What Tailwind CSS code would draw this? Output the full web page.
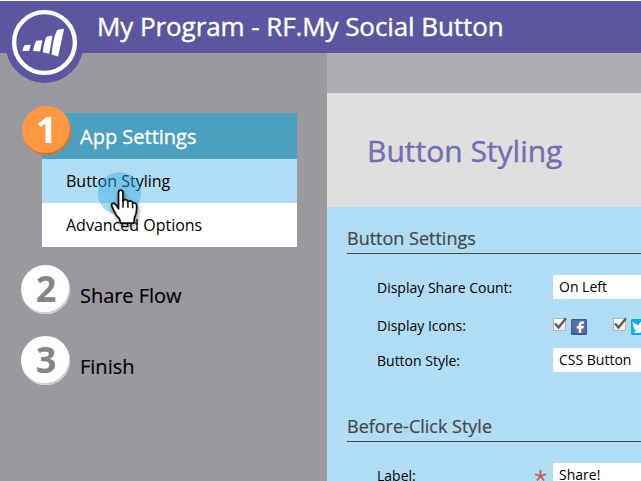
<!DOCTYPE html>
<html lang="en">
<head>
<meta charset="utf-8">
<title>My Program - RF.My Social Button</title>
<script src="https://cdn.jsdelivr.net/npm/@tailwindcss/browser@4"></script>
</head>
<body class="w-[641px] h-[481px] overflow-hidden bg-white font-['Open_Sans','Noto_Sans',sans-serif] text-black">
<div class="relative flex flex-col w-[641px] h-[481px] pt-px overflow-hidden">
  <header class="h-[52px] shrink-0 bg-[#5c559f] flex items-center pl-[97px]">
    <h1 class="text-[26px] leading-[50px] h-[52px] tracking-[-0.08px] text-white whitespace-nowrap [-webkit-text-stroke:0.4px_white]">My Program - RF.My Social Button</h1>
  </header>
  <svg class="absolute left-0 top-0" width="92" height="90" viewBox="0 0 92 90">
    <circle cx="44.500" cy="44" r="39" fill="#5c559f"/>
    <circle cx="44.500" cy="42.500" r="30.400" fill="none" stroke="#fff" stroke-width="4.400"/>
    <g fill="#fff">
      <path d="M24.500 45.200l5.300-.4q1 0 .7 1l-1.300 5-6.800.1q.8-4.300 2.100-5.700z"/>
      <path d="M36.200 40.800l5-.6q1.200 0 1 1l-2.200 10.300-7-.5q1-6.500 3.200-10.200z"/>
      <path d="M46.500 36.800l4.800-1q1.200 0 1 1l-3 17-6.500-1.500q1-10 3.700-15.500z"/>
      <path d="M58 29.800l5-1.100q1.100 0 .9 1.100l-5.800 26.800-6.600-2.200q2-17.500 5.200-23.500.4-.9 1.300-1.100z"/>
    </g>
  </svg>
  <div class="flex flex-1 min-h-0">
    <aside class="w-[327px] shrink-0 bg-[#9a999e] pt-[60px]">
      <nav>
        <div class="relative ml-[42px] w-[255px] text-base">
          <div class="h-[46px] bg-[#4c9fbf] pl-[38px] text-xl leading-[48px] text-white [-webkit-text-stroke:0.3px_white]">App Settings</div>
          <div class="h-11 bg-[#b0dcf4] pl-6 leading-[45px]">Button Styling</div>
          <div class="h-11 bg-white pl-6 leading-[45px]">Advanced Options</div>
          <div class="absolute -left-[20.500px] -top-[7px] size-[49px] rounded-full bg-[#ff9743] shadow-[inset_-1px_-2px_0_#d4702c] text-white text-[36px] font-bold leading-[48px] text-center pl-px">1</div>
        </div>
        <div class="flex mt-[18px] pl-[21px] gap-[10px]">
          <div class="size-[49px] rounded-full bg-white shadow-[inset_-1px_-2px_0_#cecece] text-[#858585] text-[36px] font-bold leading-[48px] text-center pl-px">2</div>
          <div class="text-xl leading-[61px] h-[49px] tracking-[-0.05px] [-webkit-text-stroke:0.2px_black]">Share Flow</div>
        </div>
        <div class="flex mt-[22px] pl-[21px] gap-[10px]">
          <div class="size-[49px] rounded-full bg-white shadow-[inset_-1px_-2px_0_#cecece] text-[#858585] text-[36px] font-bold leading-[48px] text-center pl-px">3</div>
          <div class="text-xl leading-[61px] h-[49px] [-webkit-text-stroke:0.2px_black]">Finish</div>
        </div>
      </nav>
    </aside>
    <main class="flex-1 min-w-0 bg-[#b0dcf4] overflow-hidden">
      <div class="h-10 bg-[#aeadb2]"></div>
      <div class="h-[114px] bg-[#dfdfdf] pl-10 text-[30px] leading-[116px] text-[#726eb2] [-webkit-text-stroke:0.4px_#726eb2]">Button Styling</div>
      <div class="pl-5 text-sm whitespace-nowrap">
        <h2 class="h-[47px] border-b border-[#474747] pt-[18px] text-lg leading-[27px] text-[#474747] [-webkit-text-stroke:0.2px_#474747]">Button Settings</h2>
        <div class="flex h-[24px] mt-[21px] pl-[30px]">
          <div class="w-[176px] leading-[25px]">Display Share Count:</div>
          <div class="flex-1 bg-white pl-[6px] leading-[24px]">On Left</div>
        </div>
        <div class="flex h-[20px] mt-[17px] pl-[30px]">
          <div class="w-[176px] leading-[20px]">Display Icons:</div>
          <svg width="88" height="20" viewBox="0 0 88 20">
            <defs><linearGradient id="box" x2="0" y2="1"><stop stop-color="#fff"/><stop offset="1" stop-color="#e8e8e8"/></linearGradient></defs>
            <g id="check"><rect x=".5" y="2.500" width="12" height="12" fill="url(#box)" stroke="#b5b5b5"/><path d="M2 7.500l3.500 4L13 2.300" fill="none" stroke="#5a5a5a" stroke-width="2.200"/></g>
            <rect x="18" y="3" width="16" height="16" rx="1.500" fill="#3e5795"/>
            <rect x="19" y="4" width="14" height="13" fill="#526da9"/>
            <path d="M25.700 17v-4.500h-2v-2.400h2V8.500q0-3 3-3h2.300v2.300h-1.500q-1.200 0-1.200 1.200v1.100h2.600l-.4 2.400h-2.200V17z" fill="#fff"/>
            <use href="#check" x="60"/>
            <rect x="78" y="3" width="16" height="16" rx="1.500" fill="#10a8e8"/>
            <path d="M80 6q2.500 3 6 3.200 0-4 4-3.500v10q-5 2.500-10 0 2.500 0 3.500-1.200-2-.3-2.700-2h1.200q-2-1-2.200-3l1 .3Q79 8 80 6z" fill="#fff"/>
          </svg>
        </div>
        <div class="flex h-[24px] mt-[12px] pl-[30px]">
          <div class="w-[176px] leading-[25px]">Button Style:</div>
          <div class="flex-1 bg-white pl-[6px] leading-[24px]">CSS Button</div>
        </div>
        <h2 class="h-[70px] border-b border-[#474747] pt-[41px] text-lg leading-[27px] text-[#474747] [-webkit-text-stroke:0.2px_#474747]">Before-Click Style</h2>
        <div class="flex h-[24px] mt-[21px] pl-[30px]">
          <div class="w-[157px] leading-[25px]">Label:</div>
          <svg class="w-[19px]" width="19" height="24" viewBox="0 0 19 24"><path d="M6.500 7v6M6.500 13L1 11.200M6.500 13l5.500-1.800M6.500 13L3 17.500M6.500 13l3.500 4.500" stroke="#cd5555" stroke-width="1.700"/></svg>
          <div class="flex-1 bg-white pl-[6px] leading-[24px]">Share!</div>
        </div>
      </div>
    </main>
  </div>
  <svg class="absolute left-[94px] top-[168px]" width="56" height="62" viewBox="0 0 56 62">
    <circle cx="25.500" cy="25.500" r="21.500" fill="#38aae6" fill-opacity=".45"/>
    <g transform="translate(0 .7)">
    <path d="M24.500 24q0-2.500 2.200-2.500T29 24v8.300q1-1.800 2.700-1.300 2 .4 2.200 1.900 1.600-1.200 3.100-.6 1.500.5 1.600 2 3.600-.8 4.100 2.500.5 7-2.200 12.200l-.6 5.500H26.500l-1-4.300q-3.500-3-5.500-8l-2.300-5q-.6-2.500 1.500-2.700 2.700.3 5.300 5.500z" fill="#fff" stroke="#111" stroke-width="1.800" stroke-linejoin="round" class="drop-shadow-[1px_2px_2px_rgba(0,0,0,0.45)]"/>
    <path d="M29 32v7M33.900 33v6M38.600 34.500v5" stroke="#111" stroke-width="1.500"/>
    </g>
  </svg>
</div>
</body>
</html>
